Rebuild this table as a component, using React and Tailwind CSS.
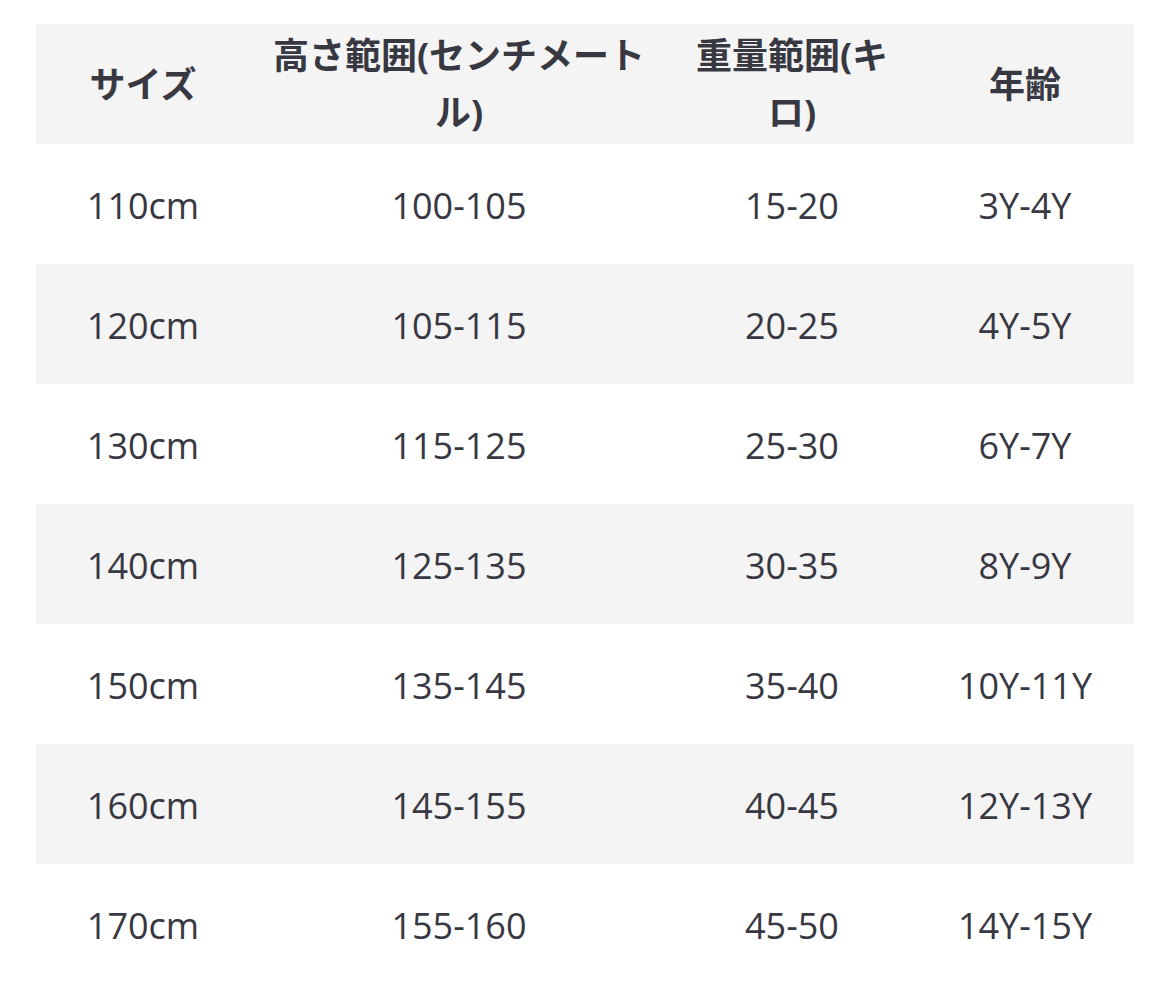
const HEADERS = ['サイズ', '高さ範囲(センチメートル)', '重量範囲(キロ)', '年齢']

const ROWS = [
  ['110cm', '100-105', '15-20', '3Y-4Y'],
  ['120cm', '105-115', '20-25', '4Y-5Y'],
  ['130cm', '115-125', '25-30', '6Y-7Y'],
  ['140cm', '125-135', '30-35', '8Y-9Y'],
  ['150cm', '135-145', '35-40', '10Y-11Y'],
  ['160cm', '145-155', '40-45', '12Y-13Y'],
  ['170cm', '155-160', '45-50', '14Y-15Y'],
]

export default function App() {
  return (
    <div className="w-[1170px] min-h-[1000px] bg-white pt-6 px-9 font-['Open_Sans','Noto_Sans_CJK_JP',sans-serif] text-[#383842]">
      <table className="w-full table-fixed border-collapse">
        <colgroup>
          <col className="w-[214px]" />
          <col className="w-[418px]" />
          <col className="w-[248px]" />
          <col className="w-[218px]" />
        </colgroup>
        <thead>
          <tr className="h-[120px] bg-[#f4f4f4]">
            {HEADERS.map((h) => (
              <th key={h} className="px-5 text-center align-middle text-[36px] leading-[57px] font-bold">
                {h}
              </th>
            ))}
          </tr>
        </thead>
        <tbody>
          {ROWS.map((row, i) => (
            <tr key={row[0]} className={`h-[120px] ${i % 2 === 1 ? 'bg-[#f4f4f4]' : 'bg-white'}`}>
              {row.map((cell, j) => (
                <td key={j} className="px-5 pt-1 text-center align-middle text-[36px] font-normal">
                  {cell}
                </td>
              ))}
            </tr>
          ))}
        </tbody>
      </table>
    </div>
  )
}
